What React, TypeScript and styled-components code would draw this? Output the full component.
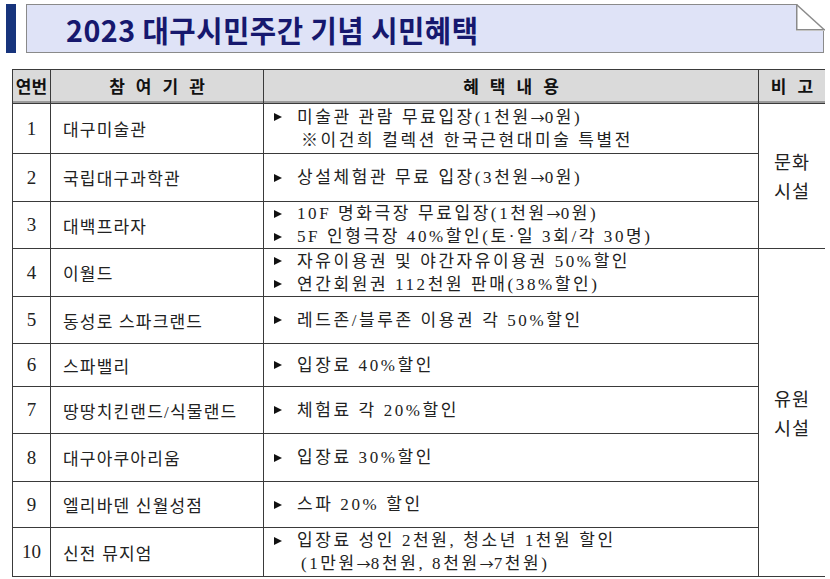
import React from "react";
import styled, { createGlobalStyle } from "styled-components";

const GlobalStyle = createGlobalStyle`
  html, body {
    margin: 0;
    padding: 0;
    background: #ffffff;
    overflow: hidden;
  }
`;

const Page = styled.div`
  width: 830px;
  height: 579px;
  overflow: hidden;
  font-family: "Liberation Serif", "Noto Sans CJK KR", serif;
  color: #1a1a1a;
`;

const TitleRow = styled.div`
  display: flex;
  align-items: stretch;
  gap: 10px;
  padding: 4px 0 0 6px;
  height: 49px;
`;

const TitleBar = styled.div`
  width: 10px;
  background: #17347c;
`;

const TitleBox = styled.div`
  position: relative;
  width: 798px;
  box-sizing: border-box;
  border: 1.5px solid #8a8a8a;
  background: #dfe3f7;
  display: flex;
  align-items: center;
  padding-left: 39px;
`;

const TitleText = styled.h1`
  margin: 0;
  font-family: "Noto Sans CJK KR", "Liberation Sans", sans-serif;
  font-weight: 700;
  font-size: 30px;
  letter-spacing: 0.5px;
  color: #16186e;
  line-height: 1;
  transform: scaleX(0.955);
  transform-origin: left center;
`;

const Fold = styled.svg`
  position: absolute;
  top: -1.5px;
  right: -1.5px;
`;

const Table = styled.div`
  margin: 16px 0 0 12px;
  width: 813px;
  box-sizing: border-box;
  display: grid;
  grid-template-columns: 37px 212px 494px 66px;
  gap: 1px;
  padding: 1px;
  background: #3a3a3a;
`;

const HeadCell = styled.div<{ $spaced?: boolean }>`
  background: #dadada;
  height: 31px;
  border-bottom: 2px solid #9a9a9a;
  display: flex;
  align-items: center;
  justify-content: center;
  font-family: "Noto Sans CJK KR", serif;
  font-weight: 700;
  font-size: 17px;
  letter-spacing: ${(p) => (p.$spaced ? "11px" : "0")};
  text-indent: ${(p) => (p.$spaced ? "11px" : "0")};
  color: #111;
`;

const Cell = styled.div<{ $h?: number; $center?: boolean }>`
  background: #ffffff;
  height: ${(p) => (p.$h ? `${p.$h}px` : "auto")};
  display: flex;
  align-items: center;
  justify-content: ${(p) => (p.$center ? "center" : "flex-start")};
`;

const NumCell = styled(Cell)`
  font-family: "Liberation Serif", serif;
  font-size: 19px;
  color: #222;
`;

const NameCell = styled(Cell)`
  padding-left: 12px;
  font-family: "Liberation Serif", "Noto Sans CJK KR", serif;
  font-size: 17px;
  letter-spacing: 1.2px;
  color: #222;
`;

const BenefitCell = styled(Cell)`
  padding-left: 10px;
  flex-direction: column;
  justify-content: center;
  align-items: flex-start;
  font-family: "Liberation Serif", "Noto Sans CJK KR", serif;
  font-size: 17px;
  letter-spacing: 2.6px;
  line-height: 23px;
  color: #222;
`;

const NoteCell = styled(Cell)<{ $span: number }>`
  grid-row: span ${(p) => p.$span};
  flex-direction: column;
  justify-content: center;
  align-items: center;
  font-family: "Noto Sans CJK KR", serif;
  font-size: 18.5px;
  line-height: 29px;
  letter-spacing: 1px;
  color: #222;
`;

const Line = styled.div<{ $sub?: boolean }>`
  display: flex;
  align-items: center;
  padding-left: ${(p) => (p.$sub ? "27px" : "0")};
  white-space: pre;
`;

const Bullet = styled.span`
  display: inline-block;
  width: 0;
  height: 0;
  border-top: 4.5px solid transparent;
  border-bottom: 4.5px solid transparent;
  border-left: 8px solid #111;
  margin-right: 15px;
`;

const Arrow = styled.span`
  font-family: "Noto Sans CJK KR", sans-serif;
  font-size: 14px;
  letter-spacing: 0;
`;

type Row = {
  no: number;
  name: string;
  lines: string[];
  sub?: string;
  h: number;
  note?: { label: string[]; span: number };
};

const rows: Row[] = [
  {
    no: 1,
    name: "대구미술관",
    lines: ["미술관 관람 무료입장(1천원→0원)"],
    sub: "※이건희 컬렉션 한국근현대미술 특별전",
    h: 49,
    note: { label: ["문화", "시설"], span: 3 },
  },
  { no: 2, name: "국립대구과학관", lines: ["상설체험관 무료 입장(3천원→0원)"], h: 47 },
  {
    no: 3,
    name: "대백프라자",
    lines: ["10F 명화극장 무료입장(1천원→0원)", "5F 인형극장 40%할인(토·일 3회/각 30명)"],
    h: 46,
  },
  {
    no: 4,
    name: "이월드",
    lines: ["자유이용권 및 야간자유이용권 50%할인", "연간회원권 112천원 판매(38%할인)"],
    h: 47,
    note: { label: ["유원", "시설"], span: 7 },
  },
  { no: 5, name: "동성로 스파크랜드", lines: ["레드존/블루존 이용권 각 50%할인"], h: 46 },
  { no: 6, name: "스파밸리", lines: ["입장료 40%할인"], h: 42 },
  { no: 7, name: "땅땅치킨랜드/식물랜드", lines: ["체험료 각 20%할인"], h: 46 },
  { no: 8, name: "대구아쿠아리움", lines: ["입장료 30%할인"], h: 47 },
  { no: 9, name: "엘리바덴 신월성점", lines: ["스파 20% 할인"], h: 45 },
  {
    no: 10,
    name: "신전 뮤지엄",
    lines: ["입장료 성인 2천원, 청소년 1천원 할인"],
    sub: "(1만원→8천원, 8천원→7천원)",
    h: 48,
  },
];

// 화살표만 다른 글꼴로 감싸기
function withArrows(text: string) {
  const parts = text.split("→");
  return parts.map((p, i) => (
    <React.Fragment key={i}>
      {p}
      {i < parts.length - 1 && <Arrow>→</Arrow>}
    </React.Fragment>
  ));
}

function App() {
  return (
    <Page>
      <GlobalStyle />
      <TitleRow>
        <TitleBar />
        <TitleBox>
          <TitleText>2023 대구시민주간 기념 시민혜택</TitleText>
          <Fold width="29" height="27" viewBox="0 0 29 27">
            <rect x="0" y="0" width="29" height="27" fill="#ffffff" />
            <path d="M0.75 0.75 L28.25 25.75" stroke="#8a8a8a" strokeWidth="1.5" fill="none" />
            <path d="M0.75 0 L0.75 25.75 L29 25.75" stroke="#8a8a8a" strokeWidth="1.5" fill="none" />
            <path d="M0 0.75 L0.75 0.75" stroke="#8a8a8a" strokeWidth="1.5" />
          </Fold>
        </TitleBox>
      </TitleRow>

      <Table>
        <HeadCell>연번</HeadCell>
        <HeadCell $spaced>참여기관</HeadCell>
        <HeadCell $spaced>혜택내용</HeadCell>
        <HeadCell $spaced>비고</HeadCell>

        {rows.map((r) => (
          <React.Fragment key={r.no}>
            <NumCell $h={r.h} $center>
              {r.no}
            </NumCell>
            <NameCell $h={r.h}>{r.name}</NameCell>
            <BenefitCell $h={r.h}>
              {r.lines.map((l) => (
                <Line key={l}>
                  <Bullet />
                  {withArrows(l)}
                </Line>
              ))}
              {r.sub && <Line $sub>{withArrows(r.sub)}</Line>}
            </BenefitCell>
            {r.note && (
              <NoteCell $span={r.note.span}>
                {r.note.label.map((t) => (
                  <span key={t}>{t}</span>
                ))}
              </NoteCell>
            )}
          </React.Fragment>
        ))}
      </Table>
    </Page>
  );
}

export default App;
